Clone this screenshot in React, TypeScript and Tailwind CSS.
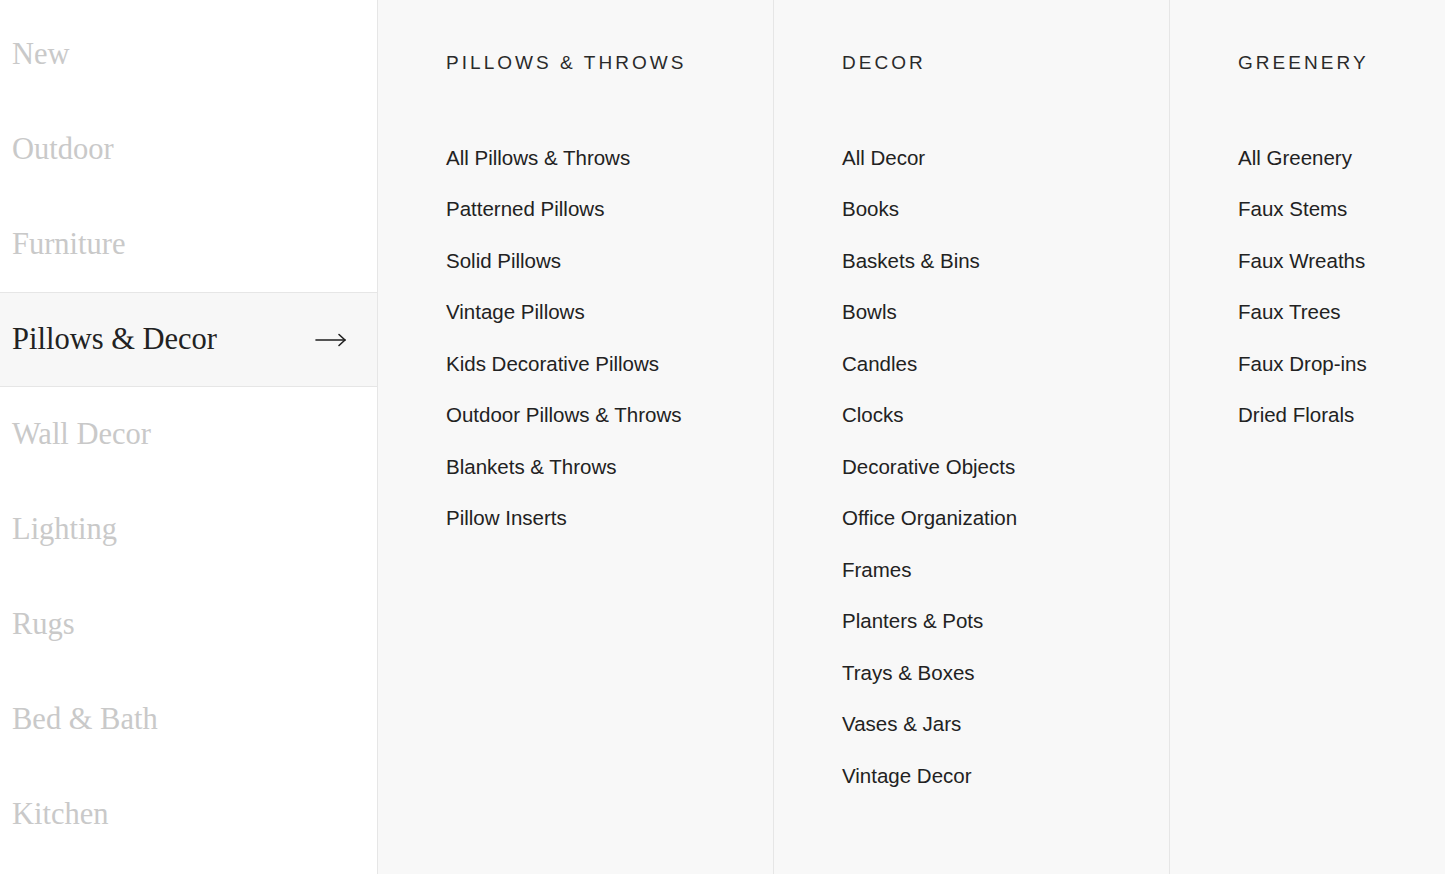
import React from 'react';

const categories = [
  'New',
  'Outdoor',
  'Furniture',
  'Pillows & Decor',
  'Wall Decor',
  'Lighting',
  'Rugs',
  'Bed & Bath',
  'Kitchen',
];

const columns = [
  {
    title: 'Pillows & Throws',
    links: [
      'All Pillows & Throws',
      'Patterned Pillows',
      'Solid Pillows',
      'Vintage Pillows',
      'Kids Decorative Pillows',
      'Outdoor Pillows & Throws',
      'Blankets & Throws',
      'Pillow Inserts',
    ],
  },
  {
    title: 'Decor',
    links: [
      'All Decor',
      'Books',
      'Baskets & Bins',
      'Bowls',
      'Candles',
      'Clocks',
      'Decorative Objects',
      'Office Organization',
      'Frames',
      'Planters & Pots',
      'Trays & Boxes',
      'Vases & Jars',
      'Vintage Decor',
    ],
  },
  {
    title: 'Greenery',
    links: [
      'All Greenery',
      'Faux Stems',
      'Faux Wreaths',
      'Faux Trees',
      'Faux Drop-ins',
      'Dried Florals',
    ],
  },
];

const ArrowRight = (): React.JSX.Element => (
  <svg width="32" height="14" viewBox="0 0 32 14" fill="none" stroke="#1f1f1f" strokeWidth="1.6" strokeLinecap="round" strokeLinejoin="round">
    <path d="M1 7h29" />
    <path d="M24 1.5 30 7l-6 5.5" />
  </svg>
);

export default function App(): React.JSX.Element {
  const active = 'Pillows & Decor';

  return (
    <div className="flex h-[874px] w-[1445px] overflow-hidden bg-white">
      {/* Category sidebar */}
      <nav className="w-[378px] shrink-0 border-r border-[#e6e6e6] bg-white pt-[7px]">
        {categories.map((name) => {
          const isActive = name === active;
          return (
            <div
              key={name}
              className={`flex h-[95px] items-center justify-between border-y pl-[12px] pr-[30px] ${
                isActive ? 'border-[#e6e6e6] bg-[#f7f7f7]' : 'border-transparent'
              }`}
            >
              <span
                className={`font-['Liberation_Serif',serif] text-[30.5px] ${
                  isActive ? 'text-[#222222]' : 'text-[#c9c9c9]'
                }`}
              >
                {name}
              </span>
              {isActive && <ArrowRight />}
            </div>
          );
        })}
      </nav>

      {/* Sub-category columns */}
      <div className="flex min-w-0 flex-1 bg-[#f8f8f8]">
        {columns.map((col) => (
          <div
            key={col.title}
            className="w-[396px] shrink-0 border-r border-[#e6e6e6] pl-[68px] pt-[51px] font-['Liberation_Sans',Arial,sans-serif] text-[#222222]"
          >
            <h3 className="text-[19px] font-light uppercase leading-[24px] tracking-[0.16em] text-[#2a2a2a]">
              {col.title}
            </h3>
            <ul className="mt-[70.5px] flex flex-col">
              {col.links.map((link) => (
                <li key={link} className="h-[51.5px] text-[20.5px] leading-[24px]">
                  {link}
                </li>
              ))}
            </ul>
          </div>
        ))}
      </div>
    </div>
  );
}
